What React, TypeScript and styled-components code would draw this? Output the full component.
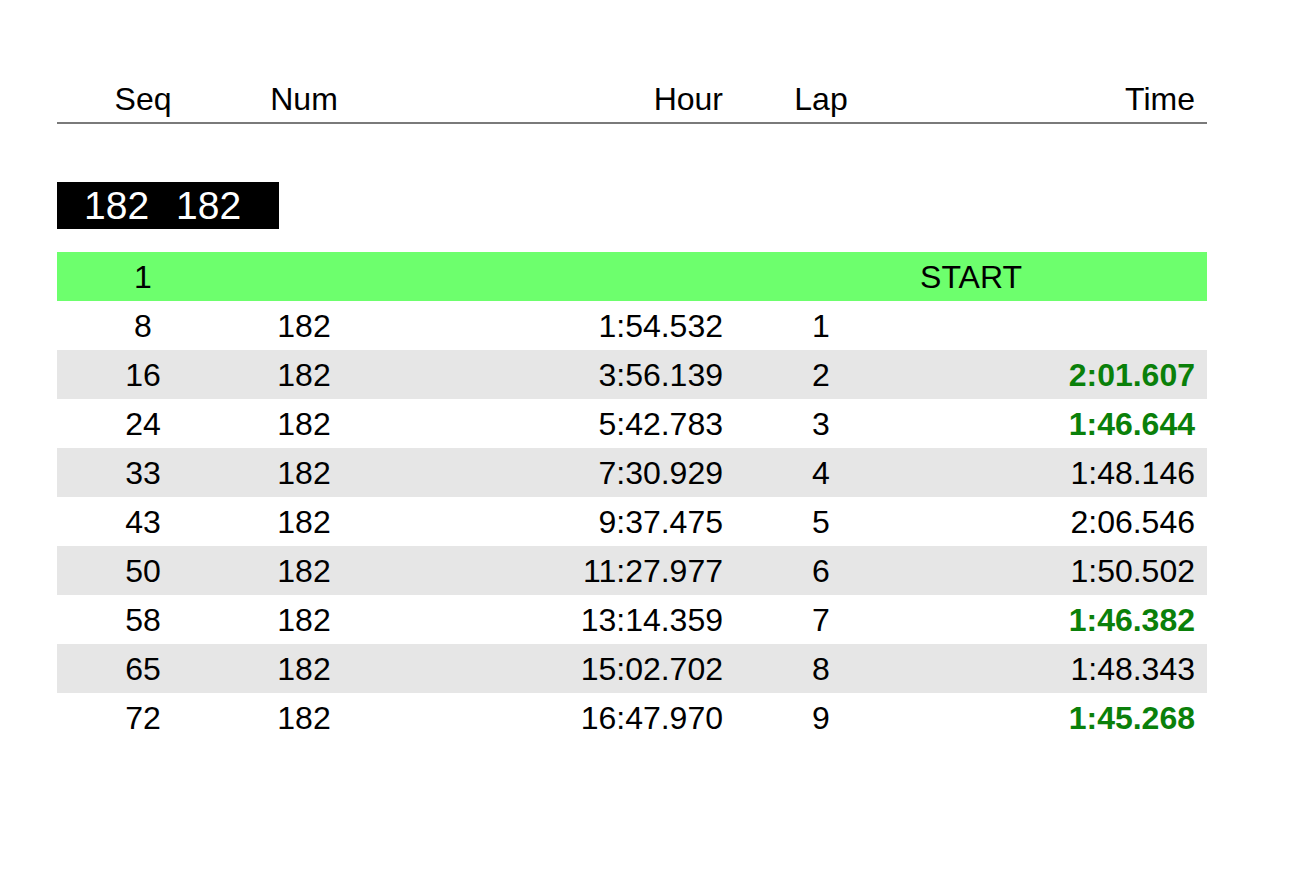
import React from "react";
import styled, { createGlobalStyle } from "styled-components";

const GlobalStyle = createGlobalStyle`
  html, body { margin: 0; padding: 0; background: #ffffff; }
  body { font-family: "Liberation Sans", Arial, sans-serif; color: #000; }
`;

const Page = styled.div`
  width: 1296px;
  height: 886px;
  box-sizing: border-box;
  padding: 74px 0 0 57px;
  display: flex;
  flex-direction: column;
`;

const cols = "172px 150px 356px 172px 300px";

const HeaderRow = styled.div`
  display: grid;
  grid-template-columns: ${cols};
  width: 1150px;
  height: 48px;
  align-items: center;
  border-bottom: 2px solid #7a7a7a;
  font-size: 32px;
`;

const Row = styled.div<{ $bg?: string }>`
  display: grid;
  grid-template-columns: ${cols};
  width: 1150px;
  height: 49px;
  align-items: center;
  font-size: 32px;
  background: ${(p) => p.$bg || "transparent"};
`;

const Cell = styled.div<{ $align: "center" | "right"; $span?: number; $green?: boolean }>`
  text-align: ${(p) => p.$align};
  padding-right: ${(p) => (p.$align === "right" ? "12px" : "0")};
  grid-column: ${(p) => (p.$span ? `span ${p.$span}` : "auto")};
  font-weight: ${(p) => (p.$green ? 700 : 400)};
  color: ${(p) => (p.$green ? "#0a800a" : "#000")};
  line-height: 1;
  padding-top: 1px;
`;

const Badge = styled.div`
  margin-top: 58px;
  margin-bottom: 23px;
  width: 222px;
  height: 47px;
  background: #000;
  color: #fff;
  font-size: 39px;
  display: flex;
  align-items: center;
  gap: 27px;
  padding-left: 27px;
  box-sizing: border-box;
  line-height: 1;
`;

type Lap = { seq: string; num: string; hour: string; lap: string; time: string; best?: boolean };

const laps: Lap[] = [
  { seq: "8", num: "182", hour: "1:54.532", lap: "1", time: "" },
  { seq: "16", num: "182", hour: "3:56.139", lap: "2", time: "2:01.607", best: true },
  { seq: "24", num: "182", hour: "5:42.783", lap: "3", time: "1:46.644", best: true },
  { seq: "33", num: "182", hour: "7:30.929", lap: "4", time: "1:48.146" },
  { seq: "43", num: "182", hour: "9:37.475", lap: "5", time: "2:06.546" },
  { seq: "50", num: "182", hour: "11:27.977", lap: "6", time: "1:50.502" },
  { seq: "58", num: "182", hour: "13:14.359", lap: "7", time: "1:46.382", best: true },
  { seq: "65", num: "182", hour: "15:02.702", lap: "8", time: "1:48.343" },
  { seq: "72", num: "182", hour: "16:47.970", lap: "9", time: "1:45.268", best: true },
];

export default function App() {
  return (
    <>
      <GlobalStyle />
      <Page>
        <HeaderRow>
          <Cell $align="center">Seq</Cell>
          <Cell $align="center">Num</Cell>
          <Cell $align="right">Hour</Cell>
          <Cell $align="center">Lap</Cell>
          <Cell $align="right">Time</Cell>
        </HeaderRow>
        <Badge>
          <span>182</span>
          <span>182</span>
        </Badge>
        <Row $bg="#6dff6d">
          <Cell $align="center">1</Cell>
          <Cell $align="center"></Cell>
          <Cell $align="right"></Cell>
          <Cell $align="center" $span={2}>START</Cell>
        </Row>
        {laps.map((l, i) => (
          <Row key={l.seq} $bg={i % 2 === 1 ? "#e6e6e6" : undefined}>
            <Cell $align="center">{l.seq}</Cell>
            <Cell $align="center">{l.num}</Cell>
            <Cell $align="right">{l.hour}</Cell>
            <Cell $align="center">{l.lap}</Cell>
            <Cell $align="right" $green={l.best}>{l.time}</Cell>
          </Row>
        ))}
      </Page>
    </>
  );
}
